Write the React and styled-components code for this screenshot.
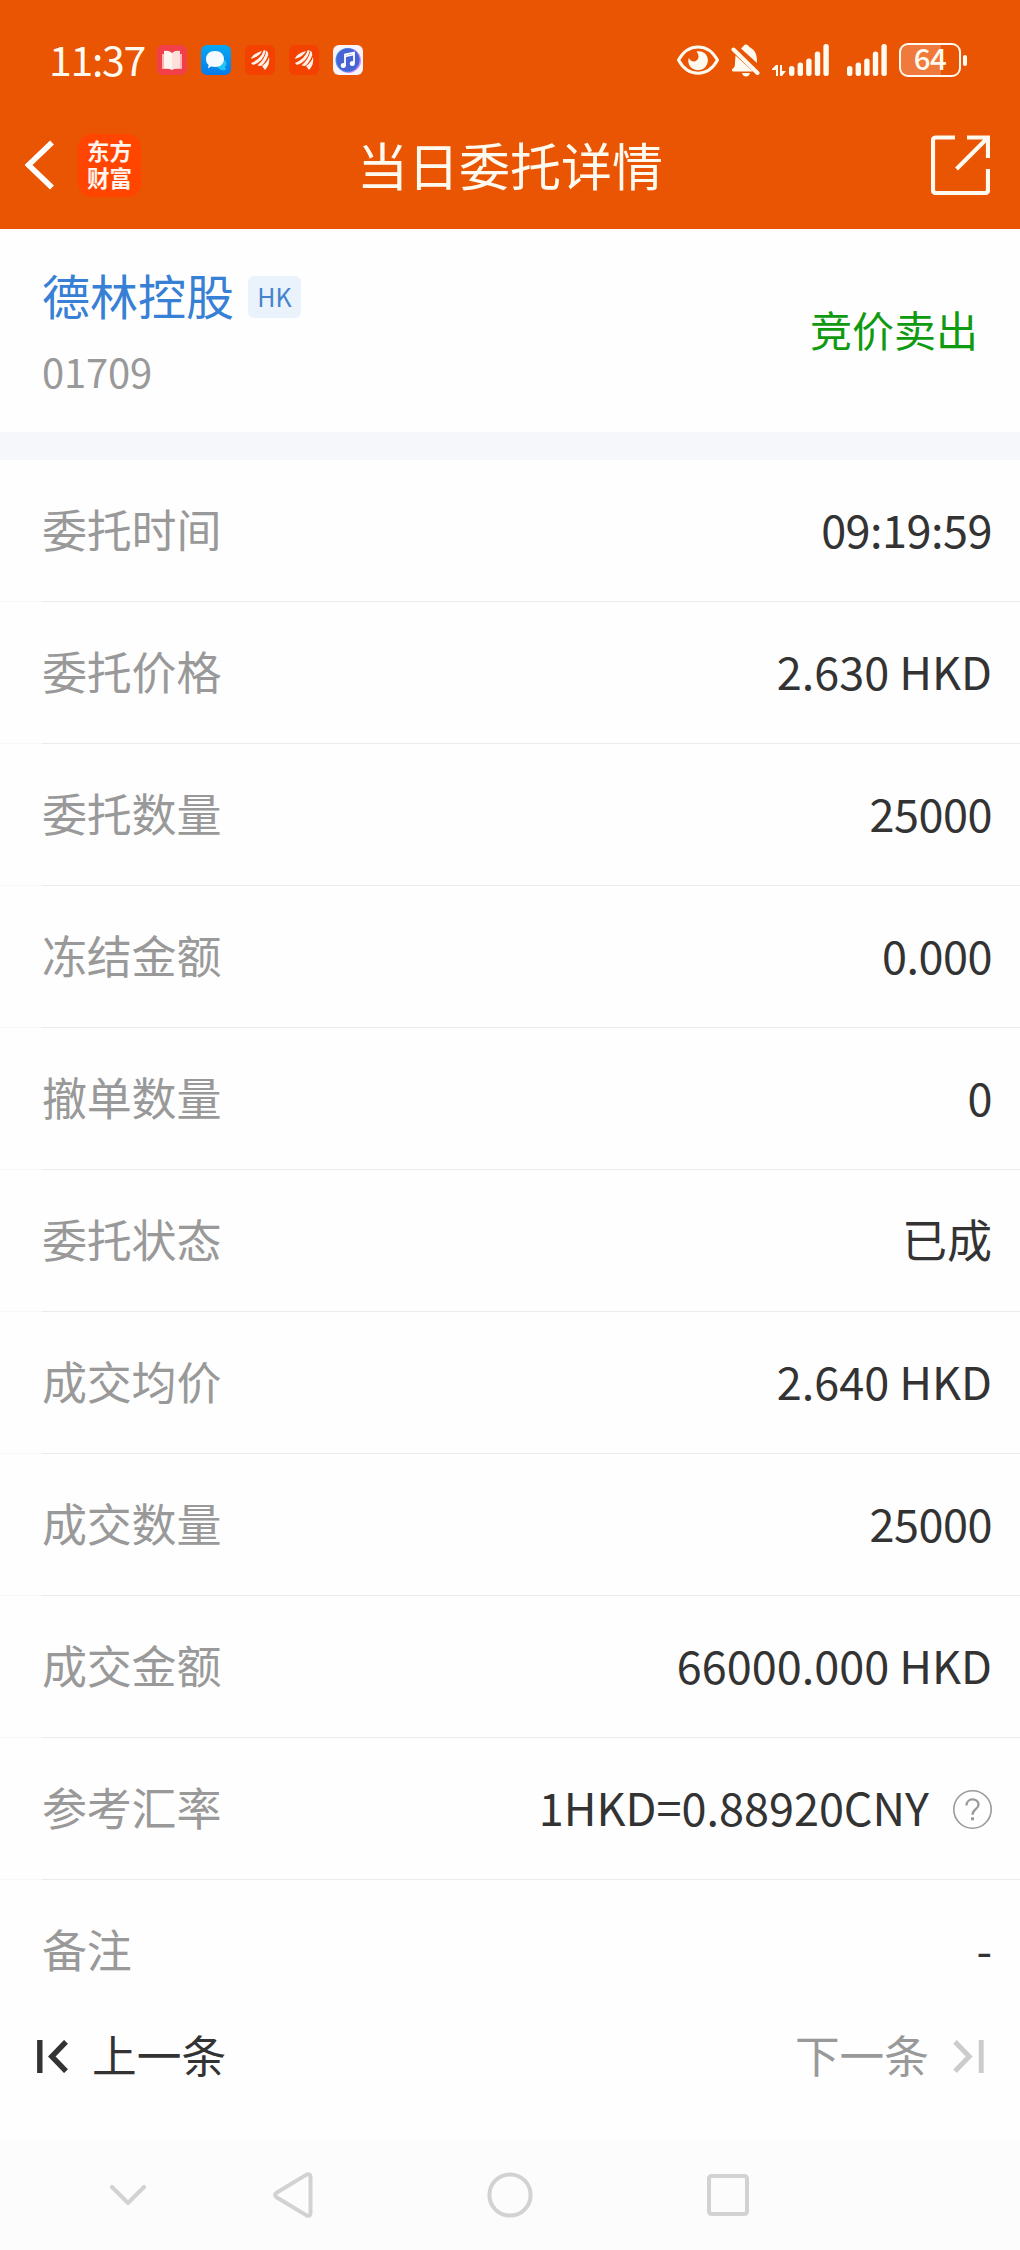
import React from "react";
import styled, { createGlobalStyle } from "styled-components";

const GlobalStyle = createGlobalStyle`
  * { box-sizing: border-box; }
  body {
    margin: 0;
    background: #fefefe;
    font-family: "Noto Sans CJK SC", sans-serif;
    color: #333;
  }
  svg { display: block; flex: none; }
`;

const Screen = styled.div`
  width: 1020px;
  height: 2250px;
  display: flex;
  flex-direction: column;
  background: #fefefe;
  overflow: hidden;
`;

const Header = styled.header`
  height: 229px;
  flex: none;
  background: #e95502;
  color: #fffaf0;
`;

const StatusBar = styled.div`
  height: 120px;
  display: flex;
  align-items: center;
  justify-content: space-between;
  padding: 0 53px 0 49px;
`;

const StatusGroup = styled.div`
  display: flex;
  align-items: center;
  gap: ${(p) => p.$gap || 0}px;
`;

const Clock = styled.span`
  width: 108px;
  margin-bottom: 5px;
  font-size: 41px;
  line-height: 48px;
  letter-spacing: -1.3px;
  white-space: nowrap;
`;

const AppIcons = styled.div`
  display: flex;
  gap: 14px;
`;

const SecondSignal = styled.div`
  margin-left: 18px;
`;

const Battery = styled.div`
  display: flex;
  align-items: center;
  gap: 2px;
  margin-left: 12px;
  &::after {
    content: "";
    width: 4px;
    height: 11px;
    border-radius: 2px;
    background: currentColor;
  }
`;

const BatteryBody = styled.div`
  width: 62px;
  height: 34px;
  border: 2.5px solid currentColor;
  border-radius: 9px;
  background: linear-gradient(to right, #f07a3c 40px, transparent 40px);
  font-size: 29.5px;
  font-weight: 500;
  line-height: 25px;
  text-align: center;
  letter-spacing: -0.6px;
`;

const TitleBar = styled.div`
  height: 90px;
  display: grid;
  grid-template-columns: 1fr auto 1fr;
  align-items: center;
  padding: 0 30px 0 25px;
`;

const BackGroup = styled.div`
  display: flex;
  align-items: center;
  gap: 23px;
`;

const BrandLogo = styled.div`
  width: 63px;
  height: 63px;
  display: flex;
  flex-direction: column;
  align-items: center;
  padding-top: 4px;
  border-radius: 14px;
  background: #ff4500;
  color: #fff4ee;
  font-family: Lato, "Noto Sans CJK SC", sans-serif;
  font-weight: 700;
`;

const BrandLine = styled.span`
  height: 27px;
  font-size: 22.5px;
  line-height: 27px;
`;

const Title = styled.h1`
  margin: 0 0 3px 5px;
  font-size: 51px;
  line-height: 70px;
  font-weight: 400;
`;

const ShareSlot = styled.div`
  display: flex;
  justify-content: flex-end;
`;

const StockPanel = styled.section`
  height: 203px;
  flex: none;
  display: flex;
  align-items: center;
  justify-content: space-between;
  padding: 0 42px;
`;

const StockInfo = styled.div`
  display: flex;
  flex-direction: column;
  gap: 21px;
`;

const NameLine = styled.div`
  display: flex;
  align-items: center;
  gap: 14px;
  height: 60px;
`;

const StockName = styled.span`
  margin-bottom: 2px;
  font-size: 48px;
  line-height: 60px;
  color: #3780d5;
`;

const MarketTag = styled.span`
  width: 53px;
  height: 42px;
  margin-top: 4px;
  border-radius: 6px;
  background: #eaf2fc;
  color: #4683cc;
  font-size: 25px;
  line-height: 41px;
  text-align: center;
`;

const StockCode = styled.span`
  font-size: 40px;
  line-height: 50px;
  letter-spacing: -0.2px;
  color: #999;
`;

const Side = styled.span`
  margin-bottom: 3px;
  font-size: 42px;
  line-height: 60px;
  color: #109a10;
`;

const Band = styled.div`
  height: 28px;
  flex: none;
  background: #f5f7fa;
`;

const Row = styled.div`
  height: 142px;
  flex: none;
  display: flex;
  align-items: center;
  justify-content: space-between;
  padding: 0 28px 0 42px;
  background: ${(p) =>
    p.$last
      ? "none"
      : "linear-gradient(to right, #f7f7f7 42px, #ebebeb 42px) bottom / 100% 1px no-repeat"};
`;

const Label = styled.span`
  padding-bottom: 4px;
  font-size: 45px;
  line-height: 66px;
  letter-spacing: -0.2px;
  color: #999;
`;

const Value = styled.span`
  padding-bottom: 4px;
  font-size: 45px;
  line-height: 66px;
  letter-spacing: ${(p) => (p.$tight ? -0.5 : 0)}px;
  color: #333;
  white-space: pre;
`;

const ValueGroup = styled.div`
  display: flex;
  align-items: center;
  gap: 24px;
`;

const Pager = styled.div`
  height: 118px;
  flex: none;
  display: flex;
  align-items: flex-start;
  justify-content: space-between;
  padding: 0 36px 0 37px;
`;

const PagerButton = styled.button`
  display: flex;
  align-items: center;
  gap: 24px;
  height: 68px;
  padding: 0;
  border: 0;
  background: none;
  font: inherit;
  color: ${(p) => (p.$muted ? "#999" : "#333")};
`;

const PagerText = styled.span`
  padding-bottom: 4px;
  font-size: 44.7px;
  line-height: 64px;
`;

const SystemNav = styled.nav`
  height: 110px;
  flex: none;
  display: grid;
  grid-template-columns: 112px 217px 218px 217px;
  place-items: center;
  padding-left: 72px;
  background: #fcfcfc;
`;

const BookIcon = () => (
  <svg width="30" height="30" viewBox="0 0 30 30">
    <rect width="30" height="30" rx="6" fill="#f1404a" />
    <path d="M5 9h20v15H5z" fill="#fbb5b5" />
    <path d="M7 6q5-1 8 2v17q-3-2-8-2z" fill="#fff3ee" />
    <path d="M23 6q-5-1-8 2v17q3-2 8-2z" fill="#fde0dc" />
  </svg>
);

const ChatIcon = () => (
  <svg width="30" height="30" viewBox="0 0 30 30">
    <defs>
      <linearGradient id="chat" x1="0" y1="0" x2="0" y2="1">
        <stop offset="0" stopColor="#08a8f2" />
        <stop offset="1" stopColor="#087bea" />
      </linearGradient>
    </defs>
    <rect width="30" height="30" rx="6" fill="url(#chat)" />
    <path d="M24 15q3 4 0 7l1 3q-7 1-9-4z" fill="#1fc5f5" />
    <path d="M14 6c5.500 0 9 3.500 9 8s-3.500 8-9 8l-4-.5-3 2 .6-3.500C5.800 18.500 5 16.500 5 14c0-4.500 3.500-8 9-8z" fill="#f4fbff" />
  </svg>
);

const BrokerIcon = () => (
  <svg width="30" height="30" viewBox="0 0 30 30">
    <rect width="30" height="30" rx="6" fill="#f34100" />
    <g fill="#fff2ec">
      <path d="M6 14C7 10 11 8 17 6q-2 5-11 8z" />
      <path d="M6 18Q16 14 18.800 5l2 .8Q18 17 8 20z" />
      <path d="M12.500 20.500Q20 14 21.500 5.500q1.800 1 1.800 4.500-3 8-7.300 11z" />
      <path d="M24 12q1.500 7-4 13l-3-4q5-3 7-9z" />
    </g>
  </svg>
);

const MusicIcon = () => (
  <svg width="30" height="30" viewBox="0 0 30 30">
    <rect width="30" height="30" rx="6" fill="#f8f3fa" />
    <circle cx="15.500" cy="15.500" r="12.500" fill="#cf8df0" />
    <circle cx="14.500" cy="15" r="12" fill="#4299eb" />
    <circle cx="15" cy="15" r="11.500" fill="#4864d4" />
    <path d="M12 21V9.500l9-2V18" fill="none" stroke="#fff" strokeWidth="1.800" />
    <path d="M12 11.500l9-2" stroke="#fff" strokeWidth="1.500" />
    <circle cx="10.300" cy="20.500" r="2.500" fill="#fff" />
    <circle cx="19.300" cy="18.500" r="2.500" fill="#fff" />
  </svg>
);

const EyeIcon = () => (
  <svg width="42" height="30" viewBox="0 0 42 30">
    <path d="M1.500 15C11-2.500 31-2.500 40.500 15 31 32.500 11 32.500 1.500 15z" fill="none" stroke="currentColor" strokeWidth="3" strokeLinejoin="round" />
    <path d="M19.500 6.500c8-1.500 12.500 5 11.200 10.500C28.500 28.500 12 27.500 11.200 16c0-1.200.2-2.200.8-3 1.500 5 9 4.500 9.500-1 .1-2-.8-4-2-5.500z" fill="currentColor" />
  </svg>
);

const MutedBellIcon = () => (
  <svg width="29" height="33" viewBox="0 0 29 33">
    <path d="M10 4.500C11.500 3 12.500 2 13 1.200q1.500-1.500 4 0c.8 1.800 2 2 4 3.500 4.500 3.500 5 8 5 14.300z" fill="currentColor" />
    <path d="M4.500 11.500L22 27.500H2.500c-2 0-2-2.500-.5-3 1.800-1 2-3 2-6z" fill="currentColor" />
    <path d="M2.500 5.500L26.500 29" stroke="currentColor" strokeWidth="4" strokeLinecap="round" />
    <path d="M11 29h8q-1 3.500-4 3.500t-4-3.500z" fill="currentColor" />
  </svg>
);

const BAR_HEIGHTS = [10, 13.5, 17.5, 24.5, 32];

const SignalIcon = ({ data }) => {
  const offset = data ? 17 : 0;
  return (
    <svg width={40 + offset} height="32" viewBox={`0 0 ${40 + offset} 32`}>
      {data && (
        <path d="M0 25l4-4h2v11H4v-6H0zM8 21h2v6h4l-4 5H8z" fill="currentColor" />
      )}
      {BAR_HEIGHTS.map((h, i) => (
        <rect key={h} x={offset + i * 8.6} y={32 - h} width="5.400" height={h} rx="2.500" fill="currentColor" />
      ))}
    </svg>
  );
};

const BackIcon = () => (
  <svg width="30" height="50" viewBox="0 0 30 50">
    <path d="M27 2.500L3.500 25 27 47.500" fill="none" stroke="#fff" strokeWidth="5.600" />
  </svg>
);

const ShareIcon = () => (
  <svg width="59" height="60" viewBox="0 0 59 60">
    <g fill="none" stroke="currentColor" strokeWidth="4.200">
      <path d="M24 2.500H5q-3 0-3 3V55q0 3 3 3h49q3 0 3-3V34" />
      <path d="M36 2.500h21V23M57 2.500L25.500 34" />
    </g>
  </svg>
);

const HelpIcon = () => (
  <svg width="39" height="39" viewBox="0 0 39 39" fill="none" stroke="#999">
    <circle cx="19.500" cy="19.500" r="18.700" strokeWidth="1.600" />
    <path d="M13.500 15.500c0-8 12-8 12-.8 0 4.500-6 4.500-6 10" strokeWidth="2.300" />
    <path d="M18 28.800h3" strokeWidth="3" />
  </svg>
);

const StepIcon = ({ next }) => (
  <svg width="31" height="33" viewBox="0 0 31 33">
    <g
      fill="none"
      stroke={next ? "#ccc" : "#333"}
      strokeWidth={next ? 5 : 5.4}
      transform={next ? "translate(31 0) scale(-1 1)" : undefined}
    >
      <path d="M2.800 0v33" />
      <path d="M29 1.800L14.800 16.500 29 31.200" />
    </g>
  </svg>
);

const NavIcon = ({ width, height, children }) => (
  <svg width={width} height={height} viewBox={`0 0 ${width} ${height}`} fill="none" stroke="#d2d2d2" strokeWidth="4" strokeLinecap="round" strokeLinejoin="round">
    {children}
  </svg>
);

const DETAILS = [
  { label: "委托时间", value: "09:19:59" },
  { label: "委托价格", value: "2.630 HKD" },
  { label: "委托数量", value: "25000" },
  { label: "冻结金额", value: "0.000" },
  { label: "撤单数量", value: "0" },
  { label: "委托状态", value: "已成" },
  { label: "成交均价", value: "2.640 HKD" },
  { label: "成交数量", value: "25000" },
  { label: "成交金额", value: "66000.000 HKD" },
  { label: "参考汇率", value: "1HKD=0.88920CNY", help: true },
  { label: "备注", value: "-" },
];

const isNumeric = (text) => /^[\d:.]+$/.test(text);

export default function App() {
  return (
    <>
      <GlobalStyle />
      <Screen>
        <Header>
          <StatusBar>
            <StatusGroup>
              <Clock>11:37</Clock>
              <AppIcons>
                <BookIcon />
                <ChatIcon />
                <BrokerIcon />
                <BrokerIcon />
                <MusicIcon />
              </AppIcons>
            </StatusGroup>
            <StatusGroup>
              <StatusGroup $gap={12}>
                <EyeIcon />
                <MutedBellIcon />
                <SignalIcon data />
              </StatusGroup>
              <SecondSignal>
                <SignalIcon />
              </SecondSignal>
              <Battery>
                <BatteryBody>64</BatteryBody>
              </Battery>
            </StatusGroup>
          </StatusBar>
          <TitleBar>
            <BackGroup>
              <BackIcon />
              <BrandLogo>
                <BrandLine>东方</BrandLine>
                <BrandLine>财富</BrandLine>
              </BrandLogo>
            </BackGroup>
            <Title>当日委托详情</Title>
            <ShareSlot>
              <ShareIcon />
            </ShareSlot>
          </TitleBar>
        </Header>

        <StockPanel>
          <StockInfo>
            <NameLine>
              <StockName>德林控股</StockName>
              <MarketTag>HK</MarketTag>
            </NameLine>
            <StockCode>01709</StockCode>
          </StockInfo>
          <Side>竞价卖出</Side>
        </StockPanel>
        <Band />

        {DETAILS.map((item, i) => (
          <Row key={item.label} $last={i === DETAILS.length - 1}>
            <Label>{item.label}</Label>
            <ValueGroup>
              <Value $tight={isNumeric(item.value)}>{item.value}</Value>
              {item.help && <HelpIcon />}
            </ValueGroup>
          </Row>
        ))}

        <Pager>
          <PagerButton>
            <StepIcon />
            <PagerText>上一条</PagerText>
          </PagerButton>
          <PagerButton $muted>
            <PagerText>下一条</PagerText>
            <StepIcon next />
          </PagerButton>
        </Pager>

        <SystemNav>
          <NavIcon width={36} height={20}>
            <path d="M2 2l16 16L34 2" />
          </NavIcon>
          <NavIcon width={40} height={46}>
            <path d="M3.500 20.800L33.500 2.600Q37.500 1 37.500 5v36q0 4-4 2.400L3.500 25.200Q0.800 23 3.500 20.800z" />
          </NavIcon>
          <NavIcon width={46} height={46}>
            <circle cx="23" cy="23" r="20.600" />
          </NavIcon>
          <NavIcon width={42} height={42}>
            <rect x="2" y="2" width="38" height="38" rx="2.500" />
          </NavIcon>
        </SystemNav>
      </Screen>
    </>
  );
}
